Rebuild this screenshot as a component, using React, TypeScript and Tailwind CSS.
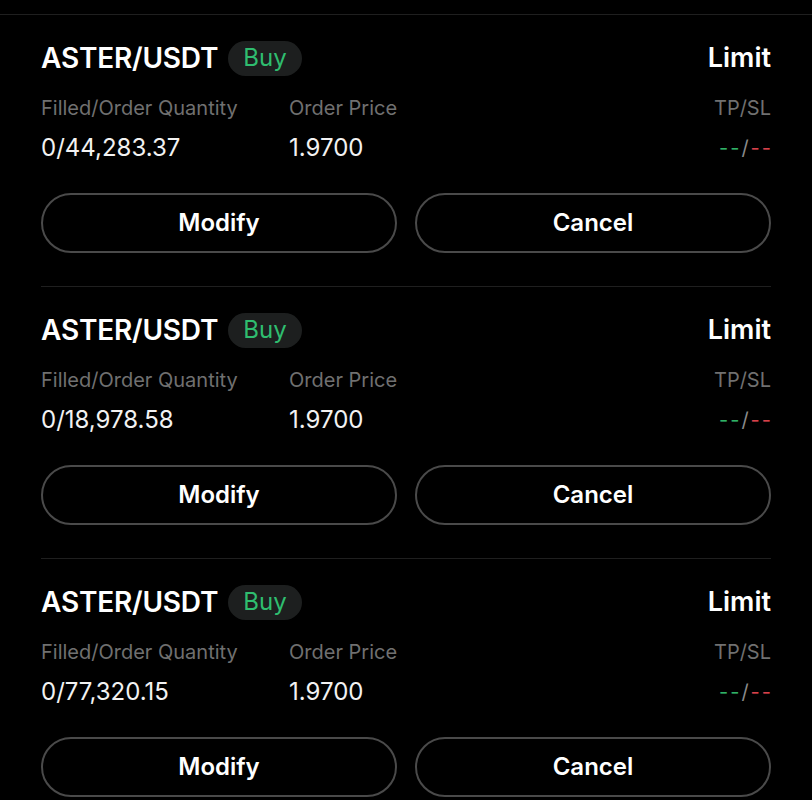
import React from 'react';

interface Order {
    id: number;
    pair: string;
    side: string;
    type: string;
    quantity: string;
    price: string;
}

const orders: Order[] = [
    { id: 1, pair: 'ASTER/USDT', side: 'Buy', type: 'Limit', quantity: '0/44,283.37', price: '1.9700' },
    { id: 2, pair: 'ASTER/USDT', side: 'Buy', type: 'Limit', quantity: '0/18,978.58', price: '1.9700' },
    { id: 3, pair: 'ASTER/USDT', side: 'Buy', type: 'Limit', quantity: '0/77,320.15', price: '1.9700' },
];

const OrderCard: React.FC<{ order: Order }> = ({ order }) => {
    return (
        <div className="pt-[25px] pb-[33px] border-b border-[#1f1f1f]">
            {/* Header: pair + side badge, order type */}
            <div className="flex items-center justify-between h-[36px]">
                <div className="flex items-center gap-[10px]">
                    <span className="text-[28px] font-semibold text-white tracking-[-0.2px]">{order.pair}</span>
                    <span className="h-[35px] px-[15px] rounded-full bg-[#1d1f1f] text-[#2fbd6f] text-[24px] flex items-center">
                        {order.side}
                    </span>
                </div>
                <span className="text-[27px] font-semibold text-white">{order.type}</span>
            </div>

            {/* Details */}
            <div className="flex mt-[20px]">
                <div className="w-[248px]">
                    <div className="text-[20px] leading-[24px] text-[#707070]">Filled/Order Quantity</div>
                    <div className="mt-[14px] text-[24px] leading-[28px] text-[#f2f2f2]">{order.quantity}</div>
                </div>
                <div className="flex-1">
                    <div className="text-[20px] leading-[24px] text-[#707070]">Order Price</div>
                    <div className="mt-[14px] text-[24px] leading-[28px] text-[#f2f2f2]">{order.price}</div>
                </div>
                <div className="text-right">
                    <div className="text-[20px] leading-[24px] text-[#707070]">TP/SL</div>
                    <div className="mt-[14px] text-[20px] leading-[28px] tracking-[2px] -mr-[2px]">
                        <span className="text-[#2fb266]">--</span>
                        <span className="text-[#8a8a8a]">/</span>
                        <span className="text-[#d6414a]">--</span>
                    </div>
                </div>
            </div>

            {/* Actions */}
            <div className="grid grid-cols-2 gap-[18px] mt-[31px]">
                <button className="h-[60px] rounded-full border-2 border-[#4a4a4a] bg-black text-white text-[24px] font-semibold">
                    Modify
                </button>
                <button className="h-[60px] rounded-full border-2 border-[#4a4a4a] bg-black text-white text-[24px] font-semibold">
                    Cancel
                </button>
            </div>
        </div>
    );
};

export default function App() {
    return (
        <div className="w-[812px] h-[800px] overflow-hidden bg-black" style={{ fontFamily: 'Inter, "Noto Sans", sans-serif' }}>
            <div className="h-[14px]" />
            <div className="border-t border-[#1f1f1f]" />
            <div className="px-[41px]">
                {orders.map((order) => (
                    <OrderCard key={order.id} order={order} />
                ))}
            </div>
        </div>
    );
}
